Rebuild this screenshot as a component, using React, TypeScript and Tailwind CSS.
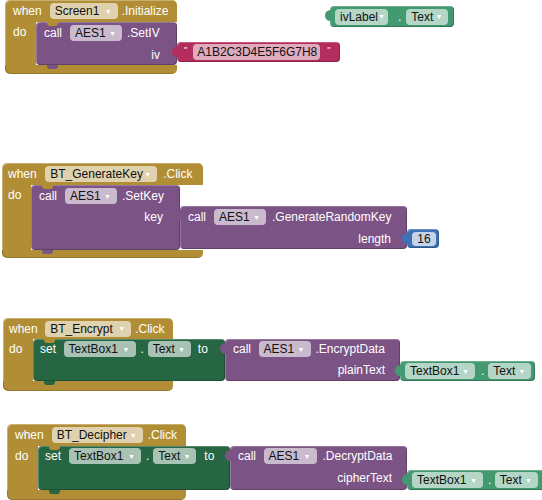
import React from "react";

const F = "font-['Liberation_Sans',Arial,sans-serif] text-[12px] leading-none text-white";
const SH = "shadow-[inset_1px_1px_0_rgba(255,255,255,0.22),inset_-1px_-1px_0_rgba(0,0,0,0.22)]";

function DD({ label, className }: { label: string; className: string }) {
  return (
    <span
      className={`h-[16px] shrink-0 rounded-[4px] bg-white/60 flex items-center justify-between pl-[5px] pr-[6px] text-[#111] ${className}`}
    >
      <span>{label}</span>
      <span className="text-[7px] leading-none text-white">▼</span>
    </span>
  );
}

function TopNotch({ color }: { color: string }) {
  return <span className={`absolute top-0 left-[11px] w-[11px] h-[4px] rounded-b-[3px] ${color}`} />;
}
function BottomTab({ color }: { color: string }) {
  return <span className={`absolute bottom-[-4px] left-[11px] w-[11px] h-[4px] rounded-b-[3px] ${color}`} />;
}
function OutTab({ color }: { color: string }) {
  return <span className={`absolute left-[-5px] top-[4px] w-[6px] h-[11px] rounded-l-full ${color}`} />;
}

export default function App() {
  return (
    <div className={`relative w-[542px] h-[500px] bg-white overflow-hidden ${F}`}>
      {/* Block 1: Screen1.Initialize */}
      <div className="absolute left-[5px] top-0 flex flex-col items-start">
        <div className="w-[172px] h-[22px] bg-[#b18e35] rounded-t-[5px] flex items-center pl-[8px] shadow-[inset_1px_1px_0_rgba(255,255,255,0.3)]">
          <span>when</span>
          <DD label="Screen1" className="ml-[8px] w-[68px]" />
          <span className="ml-[4px]">.Initialize</span>
        </div>
        <div className="flex">
          <div className="w-[31px] bg-[#b18e35] pl-[8px] shadow-[inset_1px_0_0_rgba(255,255,255,0.3)]">
            <div className="h-[20px] flex items-center">do</div>
          </div>
          <div className="flex items-start">
            <div className={`relative w-[141px] h-[43px] rounded-[4px] bg-[#7c5385] flex flex-col ${SH}`}>
              <div className="h-[22px] flex items-center pl-[8px]">
                <span>call</span>
                <DD label="AES1" className="ml-[8px] w-[52px]" />
                <span className="ml-[5px]">.SetIV</span>
              </div>
              <div className="flex-1 flex items-center justify-end pr-[17px]">iv</div>
              <TopNotch color="bg-[#b18e35]" />
              <BottomTab color="bg-[#7c5385]" />
            </div>
            <div className={`relative mt-[20px] w-[163px] h-[20px] rounded-[4px] bg-[#b32d5e] flex items-center pl-[7px] ${SH}`}>
              <OutTab color="bg-[#b32d5e]" />
              <span className="self-start mt-[4px] text-[9px]">"</span>
              <span className="ml-[6px] w-[127px] h-[16px] rounded-[4px] bg-white/60 text-[#111] flex items-center pl-[4px]">
                A1B2C3D4E5F6G7H8
              </span>
              <span className="self-start mt-[4px] ml-[7px] text-[9px]">"</span>
            </div>
          </div>
        </div>
        <div className="w-[172px] h-[9px] bg-[#b18e35] rounded-b-[5px] shadow-[inset_1px_-1px_0_rgba(0,0,0,0.15)]" />
      </div>

      {/* ivLabel.Text getter */}
      <div className={`absolute left-[330px] top-[6px] w-[124px] h-[21px] rounded-[4px] bg-[#439970] flex items-center pl-[5px] ${SH}`}>
        <OutTab color="bg-[#439970]" />
        <DD label="ivLabel" className="w-[53px]" />
        <span className="ml-[10px]">.</span>
        <DD label="Text" className="ml-[5px] w-[42px]" />
      </div>

      {/* Block 2: BT_GenerateKey.Click */}
      <div className="absolute left-[2px] top-[163px] flex flex-col items-start">
        <div className="w-[201px] h-[22px] bg-[#b18e35] rounded-t-[5px] flex items-center pl-[6px] shadow-[inset_1px_1px_0_rgba(255,255,255,0.3)]">
          <span>when</span>
          <DD label="BT_GenerateKey" className="ml-[8.5px] w-[112px]" />
          <span className="ml-[6px]">.Click</span>
        </div>
        <div className="flex">
          <div className="w-[29px] bg-[#b18e35] pl-[6px] shadow-[inset_1px_0_0_rgba(255,255,255,0.3)]">
            <div className="h-[20px] flex items-center">do</div>
          </div>
          <div className="flex items-start">
            <div className={`relative w-[149px] h-[65px] rounded-[4px] bg-[#7c5385] flex flex-col ${SH}`}>
              <div className="h-[22px] flex items-center pl-[8px]">
                <span>call</span>
                <DD label="AES1" className="ml-[8px] w-[52px]" />
                <span className="ml-[5px]">.SetKey</span>
              </div>
              <div className="h-[20px] flex items-center justify-end pr-[17px]">key</div>
              <TopNotch color="bg-[#b18e35]" />
              <BottomTab color="bg-[#7c5385]" />
            </div>
            <div className="mt-[21px] flex items-start">
              <div className={`relative w-[227px] h-[43px] rounded-[4px] bg-[#7c5385] flex flex-col ${SH}`}>
                <OutTab color="bg-[#7c5385]" />
                <div className="h-[22px] flex items-center pl-[8px]">
                  <span>call</span>
                  <DD label="AES1" className="ml-[8px] w-[52px]" />
                  <span className="ml-[6px]">.GenerateRandomKey</span>
                </div>
                <div className="flex-1 flex items-center justify-end pr-[16px]">length</div>
              </div>
              <div className={`relative mt-[23px] w-[32px] h-[19px] rounded-[4px] bg-[#3f71b5] flex items-center pl-[5px] ${SH}`}>
                <OutTab color="bg-[#3f71b5]" />
                <span className="w-[24px] h-[14px] rounded-[4px] bg-white/70 text-[#111] flex items-center justify-center">16</span>
              </div>
            </div>
          </div>
        </div>
        <div className="w-[201px] h-[8px] bg-[#b18e35] rounded-b-[5px] shadow-[inset_1px_-1px_0_rgba(0,0,0,0.15)]" />
      </div>

      {/* Block 3: BT_Encrypt.Click */}
      <div className="absolute left-[3px] top-[318px] flex flex-col items-start">
        <div className="w-[170px] h-[21px] bg-[#b18e35] rounded-t-[5px] flex items-center pl-[6px] shadow-[inset_1px_1px_0_rgba(255,255,255,0.3)]">
          <span>when</span>
          <DD label="BT_Encrypt" className="ml-[7.5px] w-[86px]" />
          <span className="ml-[4px]">.Click</span>
        </div>
        <div className="flex">
          <div className="w-[30px] bg-[#b18e35] pl-[6px] shadow-[inset_1px_0_0_rgba(255,255,255,0.3)]">
            <div className="h-[20px] flex items-center">do</div>
          </div>
          <div className="flex items-start">
            <div className={`relative w-[192px] h-[42px] rounded-[4px] bg-[#266643] ${SH}`}>
              <div className="h-[20px] flex items-center pl-[7px]">
                <span>set</span>
                <DD label="TextBox1" className="ml-[7.5px] w-[72px]" />
                <span className="ml-[5px]">.</span>
                <DD label="Text" className="ml-[4px] w-[43px]" />
                <span className="ml-[7px]">to</span>
              </div>
              <TopNotch color="bg-[#b18e35]" />
              <BottomTab color="bg-[#266643]" />
            </div>
            <div className={`relative w-[175px] h-[42px] rounded-[4px] bg-[#7c5385] flex flex-col ${SH}`}>
              <OutTab color="bg-[#7c5385]" />
              <div className="h-[20px] flex items-center pl-[8px]">
                <span>call</span>
                <DD label="AES1" className="ml-[7.5px] w-[52px]" />
                <span className="ml-[5px]">.EncryptData</span>
              </div>
              <div className="flex-1 flex items-center justify-end pr-[15px]">plainText</div>
            </div>
            <div className={`relative mt-[22px] w-[135px] h-[20px] rounded-[4px] bg-[#439970] flex items-center pl-[5px] ${SH}`}>
              <OutTab color="bg-[#439970]" />
              <DD label="TextBox1" className="w-[70px]" />
              <span className="ml-[6px]">.</span>
              <DD label="Text" className="ml-[4px] w-[43px]" />
            </div>
          </div>
        </div>
        <div className="w-[170px] h-[10px] bg-[#b18e35] rounded-b-[5px] shadow-[inset_1px_-1px_0_rgba(0,0,0,0.15)]" />
      </div>

      {/* Block 4: BT_Decipher.Click */}
      <div className="absolute left-[7px] top-[424px] flex flex-col items-start">
        <div className="w-[179px] h-[22px] bg-[#b18e35] rounded-t-[5px] flex items-center pl-[8px] shadow-[inset_1px_1px_0_rgba(255,255,255,0.3)]">
          <span>when</span>
          <DD label="BT_Decipher" className="ml-[8px] w-[91px]" />
          <span className="ml-[5px]">.Click</span>
        </div>
        <div className="flex">
          <div className="w-[31px] bg-[#b18e35] pl-[8px] shadow-[inset_1px_0_0_rgba(255,255,255,0.3)]">
            <div className="h-[20px] flex items-center">do</div>
          </div>
          <div className="flex items-start">
            <div className={`relative w-[192px] h-[44px] rounded-[4px] bg-[#266643] ${SH}`}>
              <div className="h-[20px] flex items-center pl-[7px]">
                <span>set</span>
                <DD label="TextBox1" className="ml-[8px] w-[72px]" />
                <span className="ml-[5px]">.</span>
                <DD label="Text" className="ml-[4px] w-[43px]" />
                <span className="ml-[8px]">to</span>
              </div>
              <TopNotch color="bg-[#b18e35]" />
              <BottomTab color="bg-[#266643]" />
            </div>
            <div className={`relative w-[177px] h-[44px] rounded-[4px] bg-[#7c5385] flex flex-col ${SH}`}>
              <OutTab color="bg-[#7c5385]" />
              <div className="h-[20px] flex items-center pl-[8px]">
                <span>call</span>
                <DD label="AES1" className="ml-[7.5px] w-[53px]" />
                <span className="ml-[6px]">.DecryptData</span>
              </div>
              <div className="flex-1 flex items-center justify-end pr-[15px]">cipherText</div>
            </div>
            <div className={`relative mt-[24px] w-[140px] h-[20px] rounded-[4px] bg-[#439970] flex items-center pl-[5px] ${SH}`}>
              <OutTab color="bg-[#439970]" />
              <DD label="TextBox1" className="w-[71px]" />
              <span className="ml-[5px]">.</span>
              <DD label="Text" className="ml-[3.5px] w-[43px]" />
            </div>
          </div>
        </div>
        <div className="w-[179px] h-[10px] bg-[#b18e35] rounded-b-[5px] shadow-[inset_1px_-1px_0_rgba(0,0,0,0.15)]" />
      </div>
    </div>
  );
}
